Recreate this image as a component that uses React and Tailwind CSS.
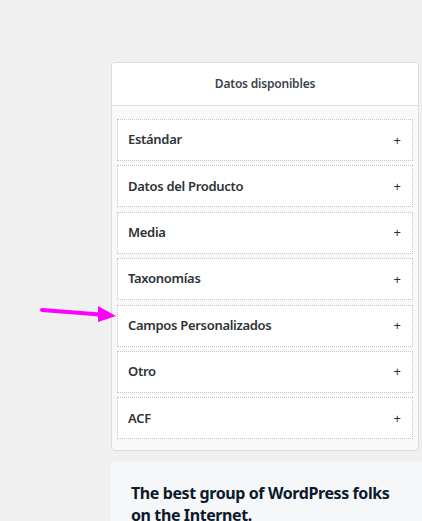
import { useState } from "react";

const groups = [
  "Estándar",
  "Datos del Producto",
  "Media",
  "Taxonomías",
  "Campos Personalizados",
  "Otro",
  "ACF",
];

function GroupItem({ label }) {
  const [open, setOpen] = useState(false);

  return (
    <button
      type="button"
      onClick={() => setOpen(!open)}
      className="h-[42px] w-full flex items-center justify-between bg-white border border-dotted border-[#c3c4c7] pl-[10px] pr-[11px] text-left"
    >
      <span className="text-[13px] font-semibold tracking-[-0.3px] text-[#2c3338]">
        {label}
      </span>
      <span className="text-[13px] text-[#2c3338] leading-none">
        {open ? "−" : "+"}
      </span>
    </button>
  );
}

export default function App() {
  return (
    <div
      className="relative min-h-[521px] bg-[#f0f0f0] pt-[62px] overflow-hidden"
      style={{ fontFamily: '"Noto Sans", "Open Sans", sans-serif' }}
    >
      {/* Available data panel */}
      <div className="ml-[111px] w-[308px] rounded-[4px] border border-[#dcdcde] bg-[#f9f9f9] overflow-hidden">
        <div className="h-[43px] flex items-center justify-center bg-white border-b border-[#dcdcde]">
          <h2 className="text-[12px] font-semibold tracking-[-0.2px] text-[#3c434a]">
            Datos disponibles
          </h2>
        </div>
        <div className="flex flex-col gap-[4.4px] px-[5px] pt-[13px] pb-[11px]">
          {groups.map((g) => (
            <GroupItem key={g} label={g} />
          ))}
        </div>
      </div>

      {/* Footer promo */}
      <div className="ml-[111px] mt-[11px] bg-[#f6f7f9] pl-[20px] pt-[20px] pb-[20px]">
        <p className="text-[16px] font-bold leading-[22px] tracking-[-0.4px] text-[#0c1a2b]">
          The best group of WordPress folks
          <br />
          on the Internet.
        </p>
      </div>

      {/* Annotation arrow */}
      <svg
        className="absolute left-[38px] top-[302px]"
        width="82"
        height="24"
        viewBox="0 0 82 24"
      >
        <line
          x1="4"
          y1="8"
          x2="62"
          y2="12.5"
          stroke="#ff00ff"
          strokeWidth="4"
          strokeLinecap="round"
        />
        <polygon points="60,4 78,14 60,20" fill="#ff00ff" />
      </svg>
    </div>
  );
}
